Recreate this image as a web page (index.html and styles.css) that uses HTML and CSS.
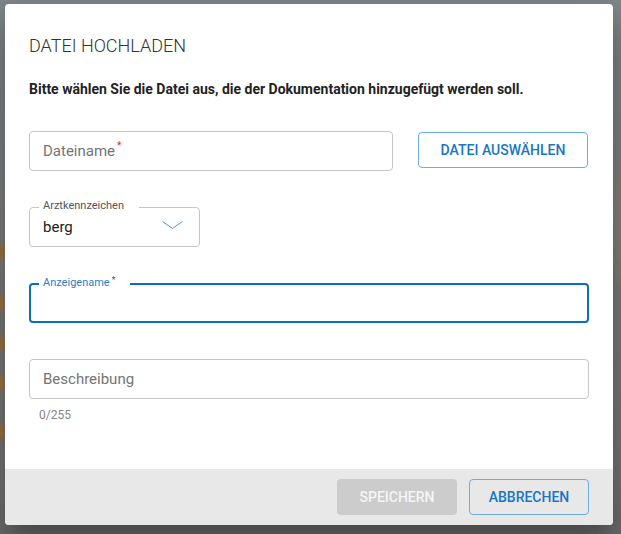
FILE: index.html
```html
<!DOCTYPE html>
<html lang="de">
<head>
<meta charset="utf-8">
<title>Datei hochladen</title>
<link rel="stylesheet" href="styles.css">
</head>
<body>
<div class="dialog">
  <div class="content">
    <h2 class="title">DATEI HOCHLADEN</h2>
    <p class="intro">Bitte wählen Sie die Datei aus, die der Dokumentation hinzugefügt werden soll.</p>
    <div class="file-row">
      <div class="field file-field"><span class="placeholder">Dateiname<span class="req">*</span></span></div>
      <button class="btn btn-outline choose">DATEI AUSWÄHLEN</button>
    </div>
    <div class="field select-field">
      <span class="float-label">Arztkennzeichen</span>
      <span class="value">berg</span>
      <svg class="chevron" width="21" height="9" viewBox="0 0 21 9"><polyline points="0.5,0.5 10.5,7.5 20.5,0.5"/></svg>
    </div>
    <div class="field focused">
      <span class="float-label active">Anzeigename<span class="req small">*</span></span>
    </div>
    <div class="field desc-field"><span class="placeholder">Beschreibung</span></div>
    <div class="counter">0/255</div>
  </div>
  <div class="actions">
    <button class="btn btn-disabled">SPEICHERN</button>
    <button class="btn btn-outline">ABBRECHEN</button>
  </div>
</div>
</body>
</html>
```

FILE: styles.css
```css
* { box-sizing: border-box; }

html, body { margin: 0; }

body {
  width: 621px;
  height: 534px;
  overflow: hidden;
  padding: 4px 0 0 5px;
  font-family: Roboto, "Liberation Sans", sans-serif;
  background:
    radial-gradient(ellipse 7px 12px at 1px 252px, #a57330, rgba(165,115,48,0)),
    radial-gradient(ellipse 7px 12px at 1px 303px, #a87430, rgba(165,115,48,0)),
    radial-gradient(ellipse 7px 12px at 1px 343px, #a57330, rgba(165,115,48,0)),
    radial-gradient(ellipse 7px 12px at 1px 383px, #a87430, rgba(165,115,48,0)),
    radial-gradient(ellipse 7px 12px at 1px 432px, #a57330, rgba(165,115,48,0)),
    radial-gradient(ellipse 10px 70px at 618px 220px, #8a8276, rgba(138,130,118,0)),
    linear-gradient(#7f898e 0, #7d8488 40px, #7c7c7c 260px, #747474 470px, #6c6c6c 534px);
}

.dialog {
  width: 608px;
  height: 521px;
  background: #fff;
  border-radius: 4px;
  display: flex;
  flex-direction: column;
  box-shadow: 0 11px 15px -7px rgba(0,0,0,.2), 0 24px 38px 3px rgba(0,0,0,.14), 0 9px 46px 8px rgba(0,0,0,.12);
}

.content {
  flex: 1;
  padding: 30px 24px 0;
}

.title {
  margin: 0;
  font-size: 18px;
  line-height: 24px;
  font-weight: 300;
  color: #333;
}

.intro {
  margin: 23px 0 0;
  font-size: 14px;
  line-height: 17px;
  font-weight: 700;
  color: #222;
}

.file-row {
  margin-top: 33px;
  display: flex;
  align-items: flex-start;
  gap: 25px;
}

.field {
  position: relative;
  height: 40px;
  border: 1px solid #c6c6c6;
  border-radius: 4px;
  display: flex;
  align-items: center;
  padding: 0 13px;
}

.file-field { width: 364px; }

.placeholder {
  font-size: 15px;
  line-height: 20px;
  color: #757575;
}

.req {
  color: #e3222b;
  font-size: 10px;
  line-height: 10px;
  vertical-align: top;
  margin-left: 2px;
}

.req.small {
  font-size: 9px;
  line-height: 9px;
  margin-left: 2px;
}

.select-field {
  margin-top: 36px;
  width: 171px;
  justify-content: space-between;
  padding-right: 16px;
}

.value {
  font-size: 15px;
  line-height: 20px;
  color: #222;
}

.chevron {
  display: block;
  margin-top: -4px;
  fill: none;
  stroke: #4597d6;
  stroke-width: 1;
}

.float-label {
  position: absolute;
  top: -9px;
  left: 9px;
  padding: 0 15px 0 4px;
  background: #fff;
  font-size: 11px;
  line-height: 14px;
  color: #555;
}

.focused {
  margin-top: 36px;
  border: 2px solid #0a6fbe;
  padding: 0 12px;
}

.float-label.active {
  left: 8px;
  color: #2a7fc6;
  padding-right: 14px;
}

.desc-field { margin-top: 36px; }

.counter {
  margin-top: 8px;
  padding-left: 10px;
  font-size: 12px;
  line-height: 16px;
  color: #858585;
}

.btn {
  width: 120px;
  height: 36px;
  border-radius: 4px;
  font-family: Roboto, "Liberation Sans", sans-serif;
  font-size: 14px;
  font-weight: 500;
  padding: 0;
  cursor: pointer;
}

.btn-outline {
  background: transparent;
  border: 1px solid #6aaee2;
  color: #1877c2;
}

.choose {
  width: 170px;
  margin-top: 1px;
}

.btn-disabled {
  background: #cccccc;
  border: none;
  color: #f5f5f5;
}

.actions {
  height: 56px;
  background: #e8e8e8;
  border-radius: 0 0 4px 4px;
  display: flex;
  justify-content: flex-end;
  align-items: center;
  gap: 12px;
  padding: 0 24px;
}
```
